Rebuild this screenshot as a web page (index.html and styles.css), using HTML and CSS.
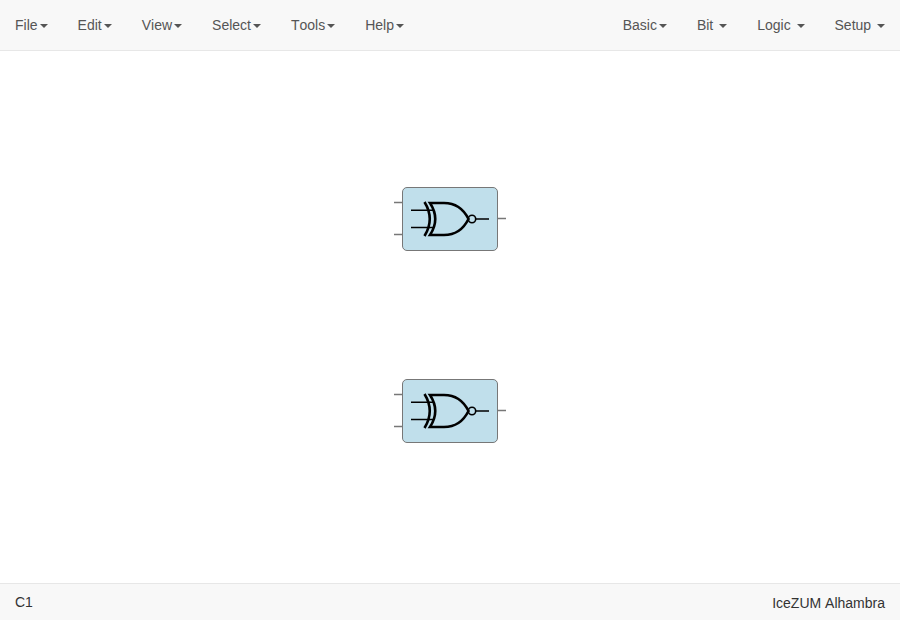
FILE: index.html
```
<!DOCTYPE html>
<html lang="en">
<head>
<meta charset="utf-8">
<title>Icestudio</title>
<link rel="stylesheet" href="styles.css">
</head>
<body>
<nav class="navbar">
<ul class="menu">
<li>File<b class="caret"></b></li>
<li>Edit<b class="caret"></b></li>
<li>View<b class="caret"></b></li>
<li>Select<b class="caret"></b></li>
<li>Tools<b class="caret"></b></li>
<li>Help<b class="caret"></b></li>
</ul>
<ul class="menu">
<li>Basic<b class="caret"></b></li>
<li>Bit <b class="caret"></b></li>
<li>Logic <b class="caret"></b></li>
<li>Setup <b class="caret"></b></li>
</ul>
</nav>
<main class="canvas">
<svg class="gate gate-top" width="112" height="64" viewBox="0 0 112 64">
<g id="gate">
<path class="port" d="M0 15.5h8M0 47.5h8M104 31.5h8"/>
<rect class="block" x="8.5" y=".5" width="95" height="63" rx="4.5"/>
<path class="wire" d="M17 23.3h23M17 40.5h23M82 32h13"/>
<path class="shape" d="M30.500 15q10.500 17 0 34M36 16q10.500 16 0 32h14c11 0 19.500-6 24.500-16c-5-10-13.500-16-24.500-16z"/>
<circle class="bubble" cx="78" cy="32" r="3.700"/>
</g>
</svg>
<svg class="gate gate-bottom" width="112" height="64" viewBox="0 0 112 64"><use href="#gate"/></svg>
</main>
<footer class="footer"><span>C1</span><span class="board">IceZUM Alhambra</span></footer>
</body>
</html>
```

FILE: styles.css
```
* { box-sizing: border-box; }
body {
  margin: 0;
  height: 100vh;
  display: flex;
  flex-direction: column;
  background: #fff;
  color: #333;
  font: 14px/20px "Liberation Sans", Arial, sans-serif;
  font-kerning: none;
}
.navbar {
  height: 51px;
  display: flex;
  justify-content: space-between;
  background: #f8f8f8;
  border-bottom: 1px solid #e7e7e7;
}
.menu { display: flex; margin: 0; padding: 0; list-style: none; }
.menu li { padding: 15px; color: #555; white-space: pre; }
.caret {
  display: inline-block;
  margin-left: 2px;
  vertical-align: middle;
  border-top: 4px solid;
  border-left: 4px solid transparent;
  border-right: 4px solid transparent;
}
.canvas { flex: 1; position: relative; }
.gate { position: absolute; left: 394px; }
.gate-top { top: 136px; }
.gate-bottom { top: 328px; }
.port { stroke: #777; stroke-width: 1.5; }
.block { fill: #c0dfeb; stroke: #777; }
.wire { stroke: #000; stroke-width: 1.6; }
.shape { fill: none; stroke: #000; stroke-width: 2.6; }
.bubble { fill: none; stroke: #000; stroke-width: 1.6; }
.footer {
  height: 37px;
  display: flex;
  justify-content: space-between;
  padding: 8px 15px;
  background: #f8f8f8;
  border-top: 1px solid #e7e7e7;
}
.board { padding-top: 1px; }
```
